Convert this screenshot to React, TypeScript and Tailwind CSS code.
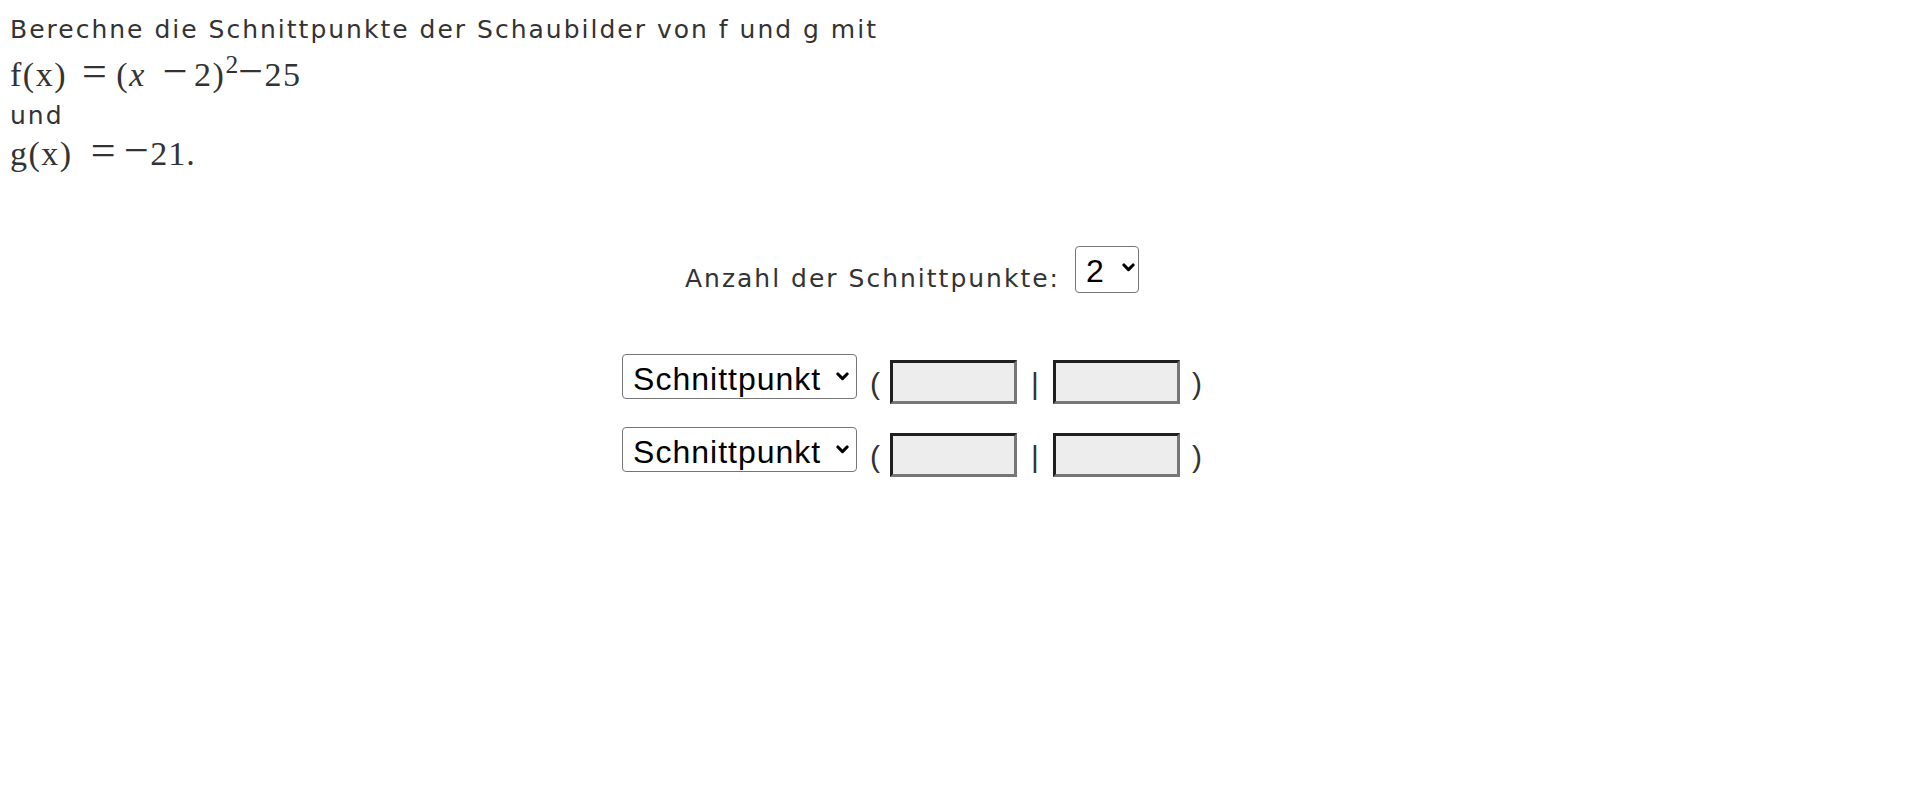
import React from "react";

const Chevron = ({ className }: { className?: string }) => (
  <svg viewBox="0 0 13 9" className={className} fill="none" stroke="currentColor" strokeWidth="3.1" strokeLinecap="round" strokeLinejoin="round">
    <path d="M1.9 2l4.6 4.6L11.1 2" />
  </svg>
);

const PointSelect = () => (
  <div className="relative">
    <select
      defaultValue="s"
      className="h-[45px] w-[235px] appearance-none rounded-[4px] border border-[#767676] bg-white py-0 pl-[10px] font-['Liberation_Sans',Arial,sans-serif] text-[32px] tracking-[1px] text-black outline-none"
    >
      <option value="s">Schnittpunkt</option>
      <option value="b">Berührpunkt</option>
    </select>
    <Chevron className="pointer-events-none absolute right-[8px] top-[18px] h-[9px] w-[13px] text-black" />
  </div>
);

const CoordInput = () => (
  <input
    type="text"
    className="mt-[6px] h-[44px] w-[127px] border-[3px] border-t-[#1f1f1f] border-l-[#1f1f1f] border-b-[#767676] border-r-[#767676] bg-[#ededed] px-1 text-[24px] outline-none"
  />
);

const Sign = ({ children }: { children: React.ReactNode }) => (
  <span className="mt-[15px] font-['Liberation_Sans',Arial,sans-serif] text-[30px] leading-[30px] text-[#333]">{children}</span>
);

const PointRow = ({ top }: { top: string }) => (
  <div className={`flex items-start ${top}`}>
    <PointSelect />
    <div className="ml-[13px] mr-[10px] flex">
      <Sign>(</Sign>
    </div>
    <CoordInput />
    <div className="mx-[14px] flex">
      <Sign>|</Sign>
    </div>
    <CoordInput />
    <div className="ml-[12px] flex">
      <Sign>)</Sign>
    </div>
  </div>
);

export default function App() {
  return (
    <div className="min-h-[810px] w-full bg-white text-[#333]">
      <div className="pl-[10px] pt-[10px]">
        <p className="font-['DejaVu_Sans',Verdana,sans-serif] text-[25px] leading-[40px] tracking-[2px]">
          Berechne die Schnittpunkte der Schaubilder von f und g mit
        </p>
        <p className="whitespace-nowrap font-['Liberation_Serif',serif] text-[34px] leading-[49px] tracking-[1.5px]">
          f(x)<span className="inline-block w-[15px]" />
          <span className="text-[44px] leading-[30px]">=</span>
          <span className="inline-block w-[8px]" />(<i>x</i>
          <span className="inline-block w-[17px]" />
          <span className="text-[44px] leading-[30px]">−</span>
          <span className="inline-block w-[5px]" />2)
          <sup className="tracking-normal">2</sup>
          <span className="text-[44px] leading-[30px]">−</span>25
        </p>
        <p className="font-['DejaVu_Sans',Verdana,sans-serif] text-[25px] leading-[33px] tracking-[2px]">und</p>
        <p className="whitespace-nowrap font-['Liberation_Serif',serif] text-[34px] leading-[43px] tracking-[1.5px]">
          g(x)<span className="inline-block w-[18px]" />
          <span className="text-[44px] leading-[30px]">=</span>
          <span className="inline-block w-[7px]" />
          <span className="text-[44px] leading-[30px]">−</span>
          <span className="tracking-[1px]">21.</span>
        </p>
      </div>

      <div className="flex w-[1824px] flex-col items-center">
        <div className="mt-[71px] flex items-end gap-[15px]">
          <span className="font-['DejaVu_Sans',Verdana,sans-serif] text-[25px] leading-[28px] tracking-[2px]">
            Anzahl der Schnittpunkte:
          </span>
          <div className="relative">
            <select
              defaultValue="2"
              className="h-[47px] w-[64px] appearance-none rounded-[4px] border border-[#767676] bg-white py-0 pl-[10px] font-['Liberation_Sans',Arial,sans-serif] text-[32px] text-black outline-none"
            >
              <option value="0">0</option>
              <option value="1">1</option>
              <option value="2">2</option>
            </select>
            <Chevron className="pointer-events-none absolute right-[4px] top-[17px] h-[9px] w-[13px] text-black" />
          </div>
        </div>

        <PointRow top="mt-[61px]" />
        <PointRow top="mt-[23px]" />
      </div>
    </div>
  );
}
